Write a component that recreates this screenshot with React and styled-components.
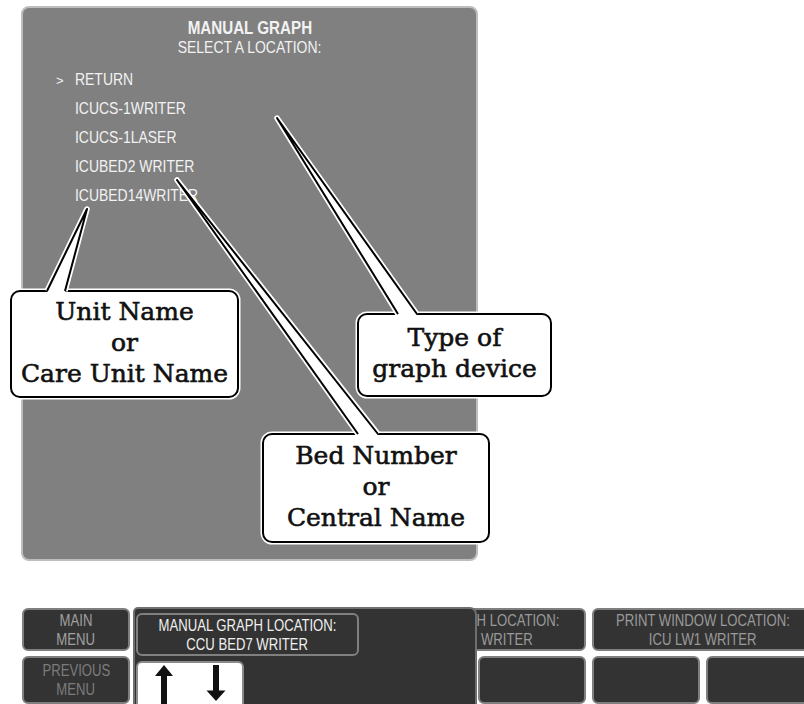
import React from "react";
import styled, { createGlobalStyle } from "styled-components";

const GlobalStyle = createGlobalStyle`
  html, body { margin: 0; padding: 0; background: #ffffff; }
  body { font-family: "Liberation Sans", Arial, sans-serif; }
  * { box-sizing: border-box; }
`;

const SANS = `"Liberation Sans", Arial, sans-serif`;

/* Arial-Narrow look: Liberation Sans squeezed horizontally */
const Narrow = styled.span`
  display: inline-block;
  white-space: nowrap;
  transform: scaleX(0.82);
  transform-origin: ${(p) => p.$origin || "center"};
`;

const Screen = styled.div`
  position: relative;
  width: 804px;
  height: 704px;
  overflow: hidden;
  display: flex;
  flex-direction: column;
  padding: 6px 0 0 21px;
  background: #ffffff;
`;

const MenuPanel = styled.section`
  width: 457px;
  height: 559px;
  background: #808080;
  border: 2px solid #bdbdbd;
  border-radius: 8px;
  padding-top: 10px;
  font-family: ${SANS};
  color: #f2f2f2;
`;

const Header = styled.header`
  display: flex;
  flex-direction: column;
  align-items: center;
`;

const Title = styled.div`
  font-size: 18.5px;
  line-height: 20px;
  font-weight: bold;
`;

const Subtitle = styled.div`
  font-size: 17px;
  line-height: 19px;
`;

const List = styled.ul`
  list-style: none;
  margin: 8px 0 0 0;
  padding: 0 0 0 33px;
`;

const Item = styled.li`
  display: flex;
  align-items: baseline;
  height: 29px;
  line-height: 29px;
  font-size: 17px;
`;

const Marker = styled.span`
  width: 19px;
  flex: none;
  font-size: 13px;
`;

const KeyBar = styled.div`
  margin: 47px 0 0 1px;
  display: grid;
  grid-template-columns: repeat(7, 108px);
  grid-template-rows: 43px 48px;
  column-gap: 6px;
  row-gap: 5px;
  font-family: ${SANS};
`;

const Key = styled.div`
  grid-column: ${(p) => p.$col} / span ${(p) => p.$span || 1};
  grid-row: ${(p) => p.$row};
  background: #333333;
  border: 2px solid #7f7f7f;
  border-radius: 6px;
  color: ${(p) => p.$tone || "#a0a0a0"};
  font-size: 16px;
  line-height: 19px;
  display: flex;
  flex-direction: column;
  align-items: center;
  justify-content: center;
  text-align: center;
  white-space: nowrap;
  overflow: hidden;
`;

const Popup = styled.div`
  position: absolute;
  left: 133px;
  top: 607px;
  width: 344px;
  height: 110px;
  background: #333333;
  border: 2px solid #6f6f6f;
  border-bottom: none;
  border-radius: 5px 7px 0 0;
  padding: 4px 0 0 1px;
  display: grid;
  grid-template-columns: 108px 115px;
  grid-template-rows: 43px 48px;
  row-gap: 5px;
  column-gap: 0;
  font-family: ${SANS};
`;

const PopupKey = styled.div`
  grid-column: 1 / span 2;
  background: #333333;
  border: 2px solid #808080;
  border-radius: 6px;
  color: #f0f0f0;
  font-size: 16px;
  line-height: 19px;
  display: flex;
  flex-direction: column;
  align-items: center;
  justify-content: center;
  white-space: nowrap;
`;

const ArrowKey = styled.div`
  grid-column: 1;
  background: #ffffff;
  border: 2px solid #8a8a8a;
  border-radius: 6px;
  display: grid;
  grid-template-columns: 52px 52px;
  justify-items: center;
  align-items: start;
  padding-top: 2px;
  overflow: hidden;
`;

const Callout = styled.div`
  position: absolute;
  left: ${(p) => p.$x}px;
  top: ${(p) => p.$y}px;
  width: ${(p) => p.$w}px;
  height: ${(p) => p.$h}px;
  background: #ffffff;
  border: 2px solid #000000;
  border-radius: 10px;
  box-shadow: 0 0 0 1.5px #ffffff;
  display: flex;
  flex-direction: column;
  align-items: center;
  justify-content: center;
  padding-bottom: 4px;
  font-family: "DejaVu Serif", "Liberation Serif", serif;
  font-size: 25px;
  line-height: 31px;
  color: #111111;
  -webkit-text-stroke: 0.6px #111111;
  text-align: center;
  white-space: nowrap;
`;

const Pointers = styled.svg`
  position: absolute;
  left: 0;
  top: 0;
  width: 804px;
  height: 704px;
  pointer-events: none;
`;

const UpArrow = () => (
  <svg width="20" height="44" viewBox="0 0 20 44">
    <polygon points="10,0 1,11 19,11" fill="#111" />
    <rect x="7" y="10" width="6" height="34" fill="#111" />
  </svg>
);

const DownArrow = () => (
  <svg width="20" height="38" viewBox="0 0 20 38">
    <rect x="7" y="0" width="6" height="27" fill="#111" />
    <polygon points="10,36 0.5,25.5 19.5,25.5" fill="#111" />
  </svg>
);

const menuItems = [
  { text: "RETURN", selected: true },
  { text: "ICUCS-1WRITER" },
  { text: "ICUCS-1LASER" },
  { text: "ICUBED2 WRITER" },
  { text: "ICUBED14WRITER" },
];

const callouts = [
  { x: 10, y: 290, w: 229, h: 108, lines: ["Unit Name", "or", "Care Unit Name"] },
  { x: 357, y: 313, w: 195, h: 84, lines: ["Type of", "graph device"] },
  { x: 262, y: 433, w: 228, h: 110, lines: ["Bed Number", "or", "Central Name"] },
];

const wedges = [
  { tip: [87, 209], a: [47, 291], b: [65, 291] },
  { tip: [277, 118], a: [398, 314], b: [417, 314] },
  { tip: [177, 180], a: [358, 434], b: [378, 434] },
];

const KeyText = ({ lines }) =>
  lines.map((l) => <Narrow key={l}>{l}</Narrow>);

export default function App() {
  return (
    <>
      <GlobalStyle />
      <Screen>
        <MenuPanel>
          <Header>
            <Title>
              <Narrow>MANUAL GRAPH</Narrow>
            </Title>
            <Subtitle>
              <Narrow>SELECT A LOCATION:</Narrow>
            </Subtitle>
          </Header>
          <List>
            {menuItems.map((it) => (
              <Item key={it.text}>
                <Marker>{it.selected ? ">" : ""}</Marker>
                <Narrow $origin="left">{it.text}</Narrow>
              </Item>
            ))}
          </List>
        </MenuPanel>

        <KeyBar>
          <Key $row={1} $col={1}>
            <KeyText lines={["MAIN", "MENU"]} />
          </Key>
          <Key $row={1} $col={2} $span={2} />
          <Key $row={1} $col={4} $span={2} $tone="#9a9a9a">
            <KeyText lines={["ALARM GRAPH LOCATION:", "ICU BED1 WRITER"]} />
          </Key>
          <Key $row={1} $col={6} $span={2} $tone="#9a9a9a">
            <KeyText lines={["PRINT WINDOW LOCATION:", "ICU LW1 WRITER"]} />
          </Key>
          <Key $row={2} $col={1} $tone="#7c7c7c">
            <KeyText lines={["PREVIOUS", "MENU"]} />
          </Key>
          {[2, 3, 4, 5, 6, 7].map((c) => (
            <Key key={c} $row={2} $col={c} />
          ))}
        </KeyBar>

        <Popup>
          <PopupKey>
            <KeyText lines={["MANUAL GRAPH LOCATION:", "CCU BED7 WRITER"]} />
          </PopupKey>
          <ArrowKey>
            <UpArrow />
            <DownArrow />
          </ArrowKey>
        </Popup>

        {callouts.map((c) => (
          <Callout key={c.lines[0]} $x={c.x} $y={c.y} $w={c.w} $h={c.h}>
            {c.lines.map((l) => (
              <span key={l}>{l}</span>
            ))}
          </Callout>
        ))}

        <Pointers viewBox="0 0 804 704">
          {wedges.map((w, i) => {
            const pts = `${w.a[0]},${w.a[1]} ${w.tip[0]},${w.tip[1]} ${w.b[0]},${w.b[1]}`;
            const fillPts = `${w.a[0]},${w.a[1] + 2} ${w.tip[0]},${w.tip[1]} ${w.b[0]},${w.b[1] + 2}`;
            return (
              <g key={i}>
                <polyline points={pts} fill="none" stroke="#fff" strokeWidth="5.5" strokeLinejoin="round" />
                <polygon points={fillPts} fill="#fff" />
                <polyline points={pts} fill="none" stroke="#000" strokeWidth="2" strokeLinejoin="round" />
              </g>
            );
          })}
        </Pointers>
      </Screen>
    </>
  );
}
